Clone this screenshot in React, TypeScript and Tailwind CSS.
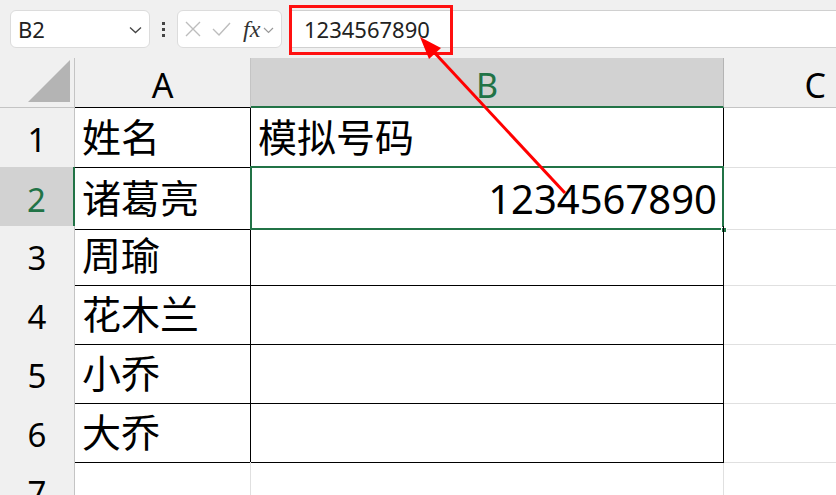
import React from 'react';

const names = ['姓名', '诸葛亮', '周瑜', '花木兰', '小乔', '大乔'];

// 公式栏
function FormulaBar() {
  return (
    <div className="relative h-[58px] bg-[#f0f0f0] flex items-center pl-[10px]">
      {/* 名称框 */}
      <div className="w-[140px] h-[38px] bg-white border border-[#dcdcdc] rounded-[6px] flex items-center justify-between pl-[7px] pr-[7px]">
        <span className="text-[22px] text-[#222]">B2</span>
        <svg width="13" height="8" viewBox="0 0 13 8" className="mt-[2px]">
          <path d="M1 1.5 L6.5 6.5 L12 1.5" fill="none" stroke="#444" strokeWidth="1.3" />
        </svg>
      </div>
      <div className="w-[27px] flex flex-col items-center gap-[3px]">
        <span className="w-[3px] h-[3px] bg-[#444]" />
        <span className="w-[3px] h-[3px] bg-[#444]" />
        <span className="w-[3px] h-[3px] bg-[#444]" />
      </div>
      {/* 取消 / 确认 / fx */}
      <div className="w-[105px] h-[38px] bg-white border border-[#dcdcdc] rounded-[6px] flex items-center pl-[7px]">
        <svg width="16" height="16" viewBox="0 0 16 16">
          <path d="M1 1 L15 15 M15 1 L1 15" stroke="#bdbdbd" strokeWidth="1.4" />
        </svg>
        <svg width="19" height="14" viewBox="0 0 19 14" className="ml-[11px]">
          <path d="M1 7 L7 13 L18 1" fill="none" stroke="#bdbdbd" strokeWidth="1.4" />
        </svg>
        <span className="ml-[12px] font-['Liberation_Serif',serif] italic text-[24px] text-[#333] leading-none">fx</span>
        <svg width="11" height="7" viewBox="0 0 11 7" className="ml-[3px] mt-[3px]">
          <path d="M1 1 L5.5 5.5 L10 1" fill="none" stroke="#999" strokeWidth="1.2" />
        </svg>
      </div>
      {/* 编辑栏 */}
      <div className="ml-[8px] flex-1 h-[38px] bg-white border-y border-[#d0d0d0] flex items-center pl-[14px]">
        <span className="text-[22px] text-[#222]">1234567890</span>
      </div>
      {/* 红框标注 */}
      <div className="absolute left-[289px] top-[5px] w-[164px] h-[50px] border-[3px] border-[#ff1010]" />
    </div>
  );
}

function ColumnHeader() {
  return (
    <div className="grid grid-cols-[75px_176px_473px_1fr] h-[50px] bg-[#f0f0f0] text-[34px] leading-none">
      <div className="relative border-r border-b border-[#c4c4c4]">
        <svg width="44" height="44" viewBox="0 0 44 44" className="absolute right-[3px] bottom-[4px]">
          <polygon points="43,1 43,43 1,43" fill="#b4b4b4" />
        </svg>
      </div>
      <div className="border-r border-[#c4c4c4] border-b border-b-black flex items-center justify-center pt-[4px]">A</div>
      <div className="bg-[#d2d2d2] border-r border-[#b4b4b4] border-b-2 border-b-[#217346] text-[#217346] flex items-center justify-center pt-[6px]">B</div>
      <div className="border-b border-[#c4c4c4] flex items-center justify-end pr-[10px] pt-[4px]">C</div>
    </div>
  );
}

function Row({ index, name }: { index: number; name?: string }) {
  const active = index === 2;
  const inTable = name !== undefined;
  return (
    <div className="grid grid-cols-[75px_176px_473px_1fr] h-[59px]">
      <div
        className={
          active
            ? 'bg-[#d2d2d2] border-r-2 border-r-[#217346] border-b border-b-[#c4c4c4] text-[#217346] flex items-center justify-center text-[33px] pt-[4px]'
            : 'bg-[#f0f0f0] border-r border-b border-[#c4c4c4] flex items-center justify-center text-[33px] pt-[4px]'
        }
      >
        {index}
      </div>
      <div
        className={
          inTable
            ? 'border-r border-b border-black flex items-center pl-[7px] text-[39px]'
            : 'border-r border-b border-[#e0e0e0]'
        }
      >
        {name}
      </div>
      <div
        className={
          inTable
            ? 'relative border-r border-b border-black flex items-center text-[39px]'
            : 'border-r border-b border-[#e0e0e0]'
        }
      >
        {index === 1 && <span className="pl-[7px]">模拟号码</span>}
        {active && (
          <>
            <span className="ml-auto pr-[6px] text-[40px] pt-[2px]">1234567890</span>
            <div className="absolute -left-[1px] -top-[1px] -right-[1px] -bottom-[1px] border-2 border-[#217346]" />
            <div className="absolute -right-[4px] -bottom-[4px] w-[6px] h-[6px] bg-[#217346] border border-white" />
          </>
        )}
      </div>
      <div className="border-b border-[#e0e0e0]" />
    </div>
  );
}

export default function App() {
  return (
    <div className="relative w-[836px] h-[495px] overflow-hidden bg-white text-black font-[Noto_Sans,Noto_Sans_CJK_SC,sans-serif]">
      <FormulaBar />
      <ColumnHeader />
      {names.map((n, i) => (
        <Row key={i} index={i + 1} name={n} />
      ))}
      <Row index={7} />
      {/* 红色箭头 */}
      <svg className="absolute left-0 top-0 pointer-events-none" width="836" height="495">
        <line x1="565" y1="193" x2="432" y2="50" stroke="#ff0000" strokeWidth="3" />
        <polygon points="420,37 441,48 429,59" fill="#ff0000" />
      </svg>
    </div>
  );
}
